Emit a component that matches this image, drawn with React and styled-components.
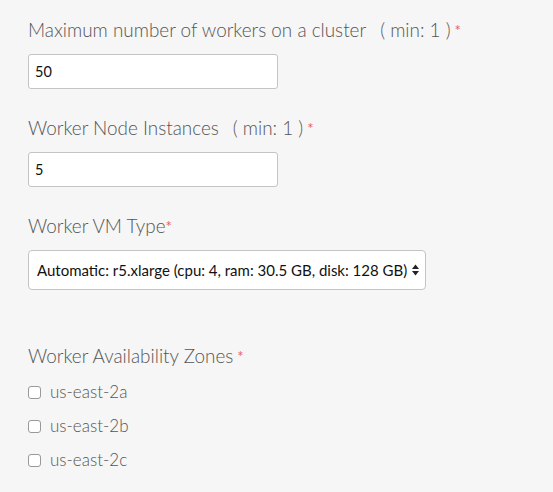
import React from 'react';
import styled, { createGlobalStyle } from 'styled-components';

const GlobalStyle = createGlobalStyle`
  html, body {
    margin: 0;
    background: #f6f6f6;
  }
  body {
    font-family: Lato, "Open Sans", sans-serif;
  }
`;

const Form = styled.div`
  padding: 16px 28px;
  display: flex;
  flex-direction: column;
`;

const Field = styled.div`
  display: flex;
  flex-direction: column;
  margin-bottom: ${props => props.gap || 25}px;
`;

const Label = styled.div`
  font-size: 18.9px;
  font-weight: 300;
  line-height: 28px;
  color: #555;
  margin-bottom: 10px;
`;

const Min = styled.span`
  margin-left: 14px;
`;

const Req = styled.span`
  color: #ec5d5d;
  font-size: 15px;
  font-weight: 400;
  vertical-align: top;
  margin-left: ${props => props.tight ? 0 : 4}px;
`;

const Input = styled.input`
  box-sizing: border-box;
  width: 250px;
  height: 35px;
  padding: 0 6px;
  border: 1px solid #c4c4c4;
  border-radius: 3px;
  background: #fff;
  font-family: inherit;
  font-size: 14.5px;
  color: #111;
  outline: none;
`;

const SelectBox = styled.div`
  box-sizing: border-box;
  width: 398px;
  height: 40px;
  padding: 0 6px 0 8px;
  border: 1px solid #c4c4c4;
  border-radius: 4px;
  background: #fff;
  display: flex;
  align-items: center;
  justify-content: space-between;
  font-size: 15px;
  white-space: nowrap;
  color: #111;
`;

const Checks = styled.div`
  display: flex;
  flex-direction: column;
  gap: 14px;
  padding-top: 2px;
`;

const CheckRow = styled.label`
  display: flex;
  align-items: center;
  gap: 9px;
  font-size: 17px;
  font-weight: 300;
  line-height: 20px;
  color: #555;
`;

const Box = styled.span`
  box-sizing: border-box;
  width: 13px;
  height: 13px;
  border: 1px solid #999;
  border-radius: 3px;
  background: #fff;
`;

const Arrows = () => (
  <svg width="7" height="12" viewBox="0 0 7 12">
    <path d="M3.5 0.5 L7 5 H0 Z" fill="#222" />
    <path d="M3.5 11.5 L7 7 H0 Z" fill="#222" />
  </svg>
);

const zones = ['us-east-2a', 'us-east-2b', 'us-east-2c'];

export default function App() {
  return (
    <>
      <GlobalStyle />
      <Form>
        <Field>
          <Label>
            Maximum number of workers on a cluster<Min>( min: 1 )</Min>
            <Req>*</Req>
          </Label>
          <Input defaultValue="50" />
        </Field>
        <Field>
          <Label>
            Worker Node Instances<Min>( min: 1 )</Min>
            <Req>*</Req>
          </Label>
          <Input defaultValue="5" />
        </Field>
        <Field gap={52}>
          <Label>
            Worker VM Type<Req tight>*</Req>
          </Label>
          <SelectBox>
            <span>Automatic: r5.xlarge (cpu: 4, ram: 30.5 GB, disk: 128 GB)</span>
            <Arrows />
          </SelectBox>
        </Field>
        <Field>
          <Label>
            Worker Availability Zones<Req>*</Req>
          </Label>
          <Checks>
            {zones.map(z => (
              <CheckRow key={z}>
                <Box />
                {z}
              </CheckRow>
            ))}
          </Checks>
        </Field>
      </Form>
    </>
  );
}
